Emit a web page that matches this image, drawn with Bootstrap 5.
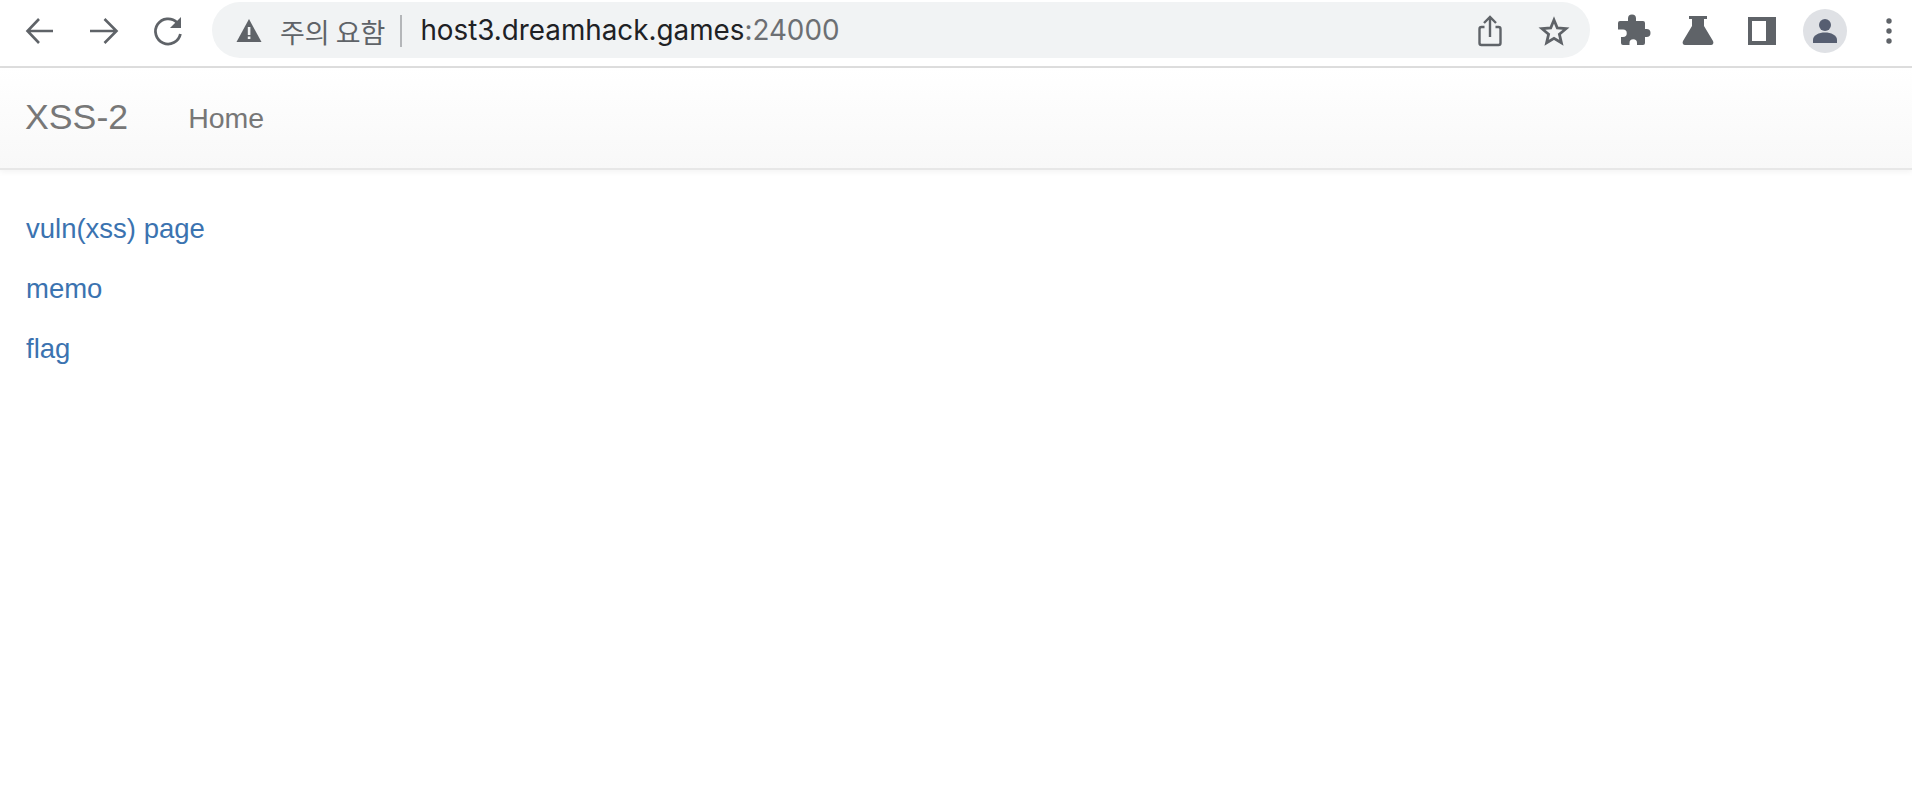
<!DOCTYPE html>
<html lang="en">
<head>
  <meta charset="UTF-8">
  <meta name="viewport" content="width=device-width, initial-scale=1.0">
  <title>XSS-2</title>
  <link href="https://cdn.jsdelivr.net/npm/bootstrap@5.3.0/dist/css/bootstrap.min.css" rel="stylesheet">
  <style>
    body {
      background: #fff;
      font-family: "Liberation Sans", Arial, sans-serif;
    }

    /* browser chrome */
    .chrome-bar {
      height: 68px;
      padding: 2px 0 8px 0;
      background: #fff;
      border-bottom: 2px solid #dedede;
    }

    .chrome-nav {
      width: 212px;
      flex: none;
      padding: 2px 0 0 20px;
      gap: 24px;
    }

    .chrome-icon {
      width: 40px;
      height: 40px;
      flex: none;
      color: #5f6368;
    }

    .omnibox {
      width: 1378px;
      height: 56px;
      flex: none;
      padding: 2px 16px 0 17px;
      background: #f1f3f4;
      border-radius: 28px;
      font-family: Inter, "Noto Sans CJK KR", sans-serif;
    }

    .warn-text {
      margin-left: 11px;
      padding-right: 15px;
      font-family: "Noto Sans CJK KR", sans-serif;
      font-size: 27px;
      line-height: 1;
      color: #5f6368;
      white-space: nowrap;
    }

    .omni-sep {
      width: 2px;
      height: 32px;
      flex: none;
      background: #b4b6b9;
    }

    .omni-url {
      margin-left: 18px;
      font-size: 27.8px;
      color: #202124;
      white-space: nowrap;
    }

    .omni-url span {
      color: #6c6f73;
    }

    .chrome-tools {
      padding: 2px 0 0 22px;
      gap: 24px;
    }

    .puzzle-icon {
      margin-right: 2px;
    }

    .avatar-wrap {
      width: 44px;
      height: 44px;
      flex: none;
      margin: 0 -2px 0 -3px;
      background: #dfe1e5;
      border-radius: 50%;
    }

    /* page navbar */
    .site-nav {
      height: 102px;
      padding: 0 25px;
      background: linear-gradient(to bottom, #fff 0, #f8f8f8 100%);
      border-bottom: 2px solid #e7e7e7;
      box-shadow: 0 2px 6px rgba(0, 0, 0, .05);
    }

    .site-nav .navbar-brand {
      margin: 0 60px 0 0;
      padding: 0;
      font-size: 35.7px;
      color: #777;
    }

    .site-nav .nav-link {
      padding: 0;
      font-size: 28.5px;
      color: #777;
    }

    .page-links {
      padding: 39px 26px 0;
    }

    .page-links p {
      margin: 0 0 20px;
      font-size: 27.5px;
      line-height: 40px;
    }

    .page-links a {
      color: #3b73b0;
      text-decoration: none;
    }
  </style>
</head>
<body>

  <div class="chrome-bar d-flex align-items-center">
    <div class="chrome-nav d-flex align-items-center">
      <svg class="chrome-icon" viewBox="0 0 40 40" fill="none" stroke="currentColor" stroke-width="2.6"><path d="M33 20H8M19 8 7.500 20 19 32"/></svg>
      <svg class="chrome-icon" viewBox="0 0 40 40" fill="none" stroke="currentColor" stroke-width="2.6"><path d="M6 20h26M20.500 8l12 12-12 12"/></svg>
      <svg class="chrome-icon" viewBox="0 0 40 40"><path d="M29 11.500A12.600 12.600 0 1 0 32.400 23" fill="none" stroke="currentColor" stroke-width="2.8"/><path d="M33 6v11H22z" fill="currentColor"/></svg>
    </div>
    <div class="omnibox d-flex align-items-center">
      <svg class="chrome-icon" viewBox="0 0 40 40"><path d="M20 8 32.500 31h-25z" fill="currentColor"/><path d="M18.800 16h2.600v8h-2.600zM18.800 25.500h2.600V28h-2.600z" fill="#f1f3f4"/></svg>
      <div class="warn-text">주의 요함</div>
      <div class="omni-sep"></div>
      <div class="omni-url">host3.dreamhack.games<span>:24000</span></div>
      <div class="d-flex align-items-center gap-4 ms-auto">
        <svg class="chrome-icon" viewBox="0 0 40 40" fill="none" stroke="currentColor" stroke-width="2.4"><path d="M14.500 16H11.500a2 2 0 0 0-2 2v14a2 2 0 0 0 2 2h17a2 2 0 0 0 2-2V18a2 2 0 0 0-2-2h-3M20 26V7M14 12l6-6 6 6"/></svg>
        <svg class="chrome-icon" viewBox="0 0 40 40" fill="none" stroke="currentColor" stroke-width="2.800"><path d="M20 9l3.300 8 8.700.7-6.600 5.600 2 8.500-7.400-4.500-7.400 4.500 2-8.500-6.600-5.600 8.700-.7z"/></svg>
      </div>
    </div>
    <div class="chrome-tools d-flex align-items-center">
      <svg class="chrome-icon puzzle-icon" viewBox="0 0 40 40" fill="currentColor"><path d="M16 7.500a4 4 0 0 1 8 0V10h7a2 2 0 0 1 2 2v6h1.500a4 4 0 0 1 0 8H33v6a2 2 0 0 1-2 2h-6v-2a3.600 3.600 0 0 0-7.500 0v2H11a2 2 0 0 1-2-2v-6h2a3.700 3.700 0 0 0 0-7.500H6V12a2 2 0 0 1 2-2h8z"/></svg>
      <svg class="chrome-icon" viewBox="0 0 40 40" fill="currentColor"><path d="M11 5h18v3h-3v7l9 15c1 2 0 4-2 4H7c-2 0-3-2-2-4l9-15V8h-3z"/></svg>
      <svg class="chrome-icon" viewBox="0 0 40 40"><path fill-rule="evenodd" d="M6 6h28v28H6zm4 4v20h14V10z" fill="currentColor"/></svg>
      <div class="avatar-wrap d-flex align-items-center justify-content-center">
        <svg width="30" height="30" viewBox="0 0 30 30" fill="#565e71"><circle cx="15" cy="9" r="6"/><path d="M3 27v-3c0-5 6-7.500 12-7.500S27 19 27 24v3z"/></svg>
      </div>
      <svg class="chrome-icon" viewBox="0 0 40 40" fill="currentColor"><circle cx="20" cy="10" r="2.700"/><circle cx="20" cy="20" r="2.700"/><circle cx="20" cy="30" r="2.700"/></svg>
    </div>
  </div>

  <nav class="navbar site-nav flex-nowrap justify-content-start">
    <a class="navbar-brand" href="#">XSS-2</a>
    <a class="nav-link" href="#">Home</a>
  </nav>

  <div class="page-links">
    <p><a href="#">vuln(xss) page</a></p>
    <p><a href="#">memo</a></p>
    <p><a href="#">flag</a></p>
  </div>

  <script src="https://cdn.jsdelivr.net/npm/bootstrap@5.3.0/dist/js/bootstrap.bundle.min.js"></script>
</body>
</html>
